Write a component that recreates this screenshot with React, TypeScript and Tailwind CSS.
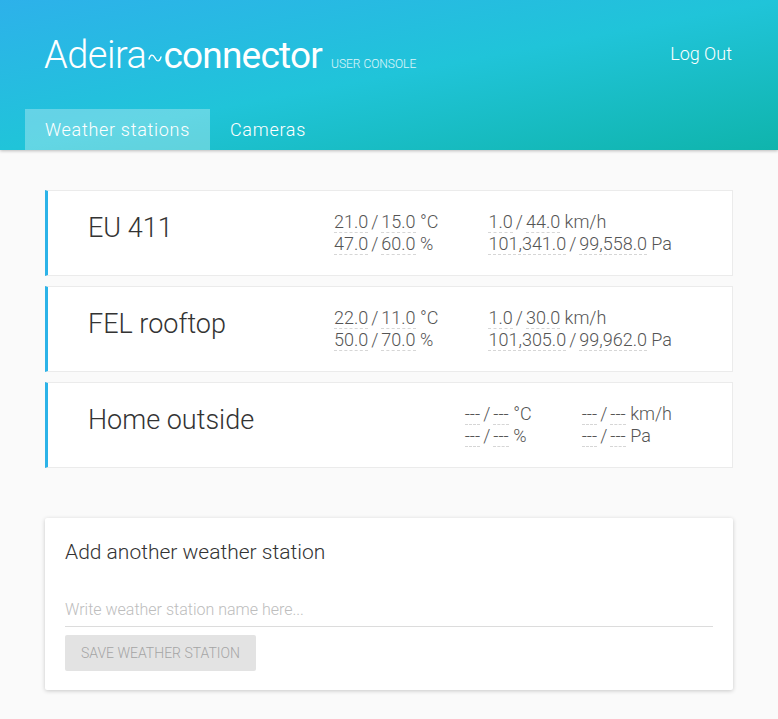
import { useState } from "react";

interface Station {
  id: string;
  name: string;
  temp: [string, string];
  hum: [string, string];
  wind: [string, string];
  press: [string, string];
}

const stations: Station[] = [
  { id: "eu411", name: "EU 411", temp: ["21.0", "15.0"], hum: ["47.0", "60.0"], wind: ["1.0", "44.0"], press: ["101,341.0", "99,558.0"] },
  { id: "fel", name: "FEL rooftop", temp: ["22.0", "11.0"], hum: ["50.0", "70.0"], wind: ["1.0", "30.0"], press: ["101,305.0", "99,962.0"] },
  { id: "home", name: "Home outside", temp: ["---", "---"], hum: ["---", "---"], wind: ["---", "---"], press: ["---", "---"] },
];

function Pair({ v, unit }: { v: [string, string]; unit: string }) {
  return (
    <div className="whitespace-nowrap">
      <span className="border-b border-dashed border-[#d6d6d6]">{v[0]}</span>
      <span className="mx-[3px]">/</span>
      <span className="border-b border-dashed border-[#d6d6d6]">{v[1]}</span>
      <span> {unit}</span>
    </div>
  );
}

export default function App() {
  const [tab, setTab] = useState<"weather" | "cameras">("weather");
  const [name, setName] = useState("");

  return (
    <div className="min-h-screen bg-[#fafafa] font-['Roboto',sans-serif] font-light text-[#444]">
      {/* Header */}
      <header className="h-[150px] bg-gradient-to-br from-[#2db1ea] via-[#20c4d9] to-[#0fb4ac] shadow-[0_1px_3px_rgba(0,0,0,0.25)] flex flex-col">
        <div className="flex items-start justify-between pl-[44px] pr-[46px] pt-[36px]">
          <div className="flex items-baseline text-white">
            <span className="text-[38px] font-light tracking-[-0.5px] leading-none">Adeira</span>
            <svg width="14" height="10" viewBox="0 0 14 10" className="mx-[1.5px] self-center mt-[6px]">
              <path d="M1 6 C2.5 1, 5 1, 7 5 S11.5 9, 13 4" fill="none" stroke="white" strokeWidth="1.4" strokeLinecap="round" />
            </svg>
            <span className="text-[37px] font-normal tracking-[-0.8px] leading-none">connector</span>
            <span className="ml-[9px] text-[12px] font-light text-white/85">USER CONSOLE</span>
          </div>
          <button className="text-[18px] font-light text-white mt-[4px]">Log Out</button>
        </div>
        <nav className="mt-auto flex px-[25px]">
          {([["weather", "Weather stations"], ["cameras", "Cameras"]] as const).map(([k, label]) => (
            <button
              key={k}
              onClick={() => setTab(k)}
              className={`h-[41px] px-[20px] text-[18px] font-light tracking-[0.7px] text-white ${tab === k ? "bg-white/30" : ""}`}
            >
              {label}
            </button>
          ))}
        </nav>
      </header>

      <main className="px-[45px] pt-[40px] pb-[28px]">
        {/* Stations */}
        <div className="flex flex-col gap-[10px]">
          {stations.map((s) => (
            <div
              key={s.id}
              className="h-[86px] flex items-center bg-white border border-[#ebebeb] border-l-[3px] border-l-[#2cb3e8] pl-[40px] pr-[60px]"
            >
              <h2 className="text-[27px] font-light text-[#333] -mt-[10px]">{s.name}</h2>
              <div className="ml-auto flex gap-[50px] text-[18px] leading-[22px] text-[#555]">
                <div>
                  <Pair v={s.temp} unit="°C" />
                  <Pair v={s.hum} unit="%" />
                </div>
                <div>
                  <Pair v={s.wind} unit="km/h" />
                  <Pair v={s.press} unit="Pa" />
                </div>
              </div>
            </div>
          ))}
        </div>

        {/* Add form */}
        <div className="mt-[50px] bg-white rounded-[2px] shadow-[0_1px_4px_rgba(0,0,0,0.2)] px-[20px] pt-[20px] pb-[19px]">
          <h3 className="text-[21px] leading-[28px] font-light text-[#333]">Add another weather station</h3>
          <input
            value={name}
            onChange={(e) => setName(e.target.value)}
            placeholder="Write weather station name here..."
            className="mt-[26px] w-full h-[35px] border-b border-[#dcdcdc] text-[16px] font-light outline-none placeholder:text-[#bdbdbd]"
          />
          <button
            disabled={!name}
            className="mt-[8px] h-[36px] px-[16px] bg-[#e3e3e3] text-[14px] font-light text-[#a5a5a5] uppercase rounded-[2px]"
          >
            Save weather station
          </button>
        </div>
      </main>
    </div>
  );
}
